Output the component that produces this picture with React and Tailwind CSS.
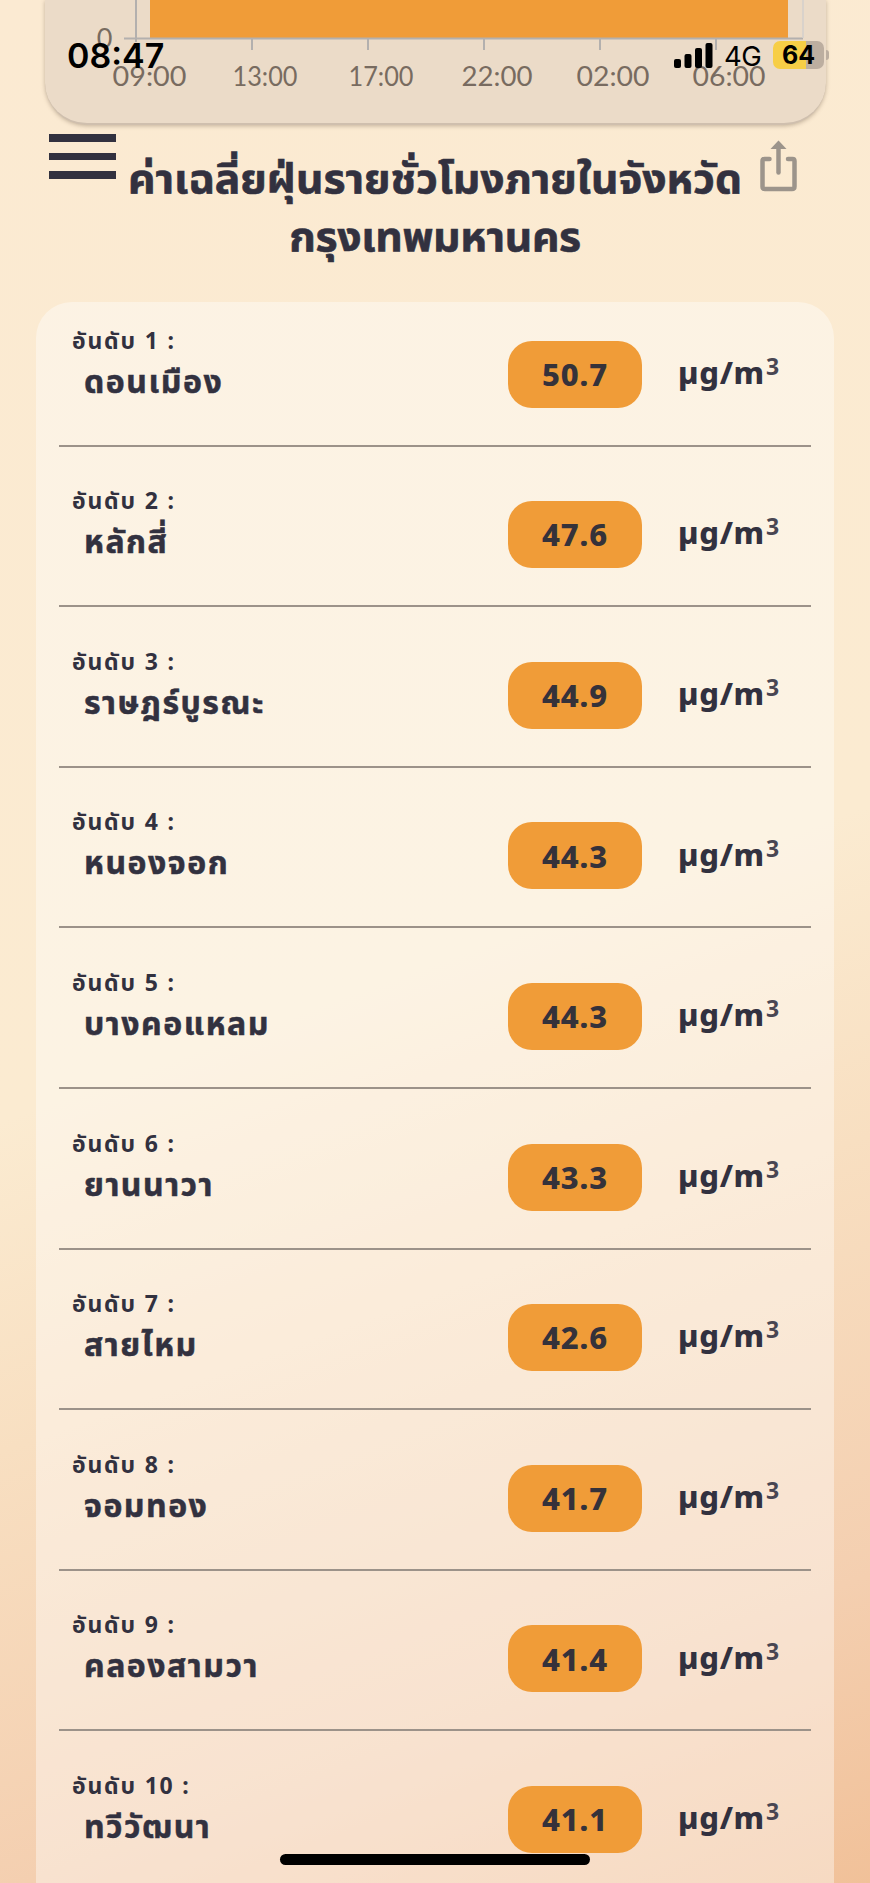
import React from "react";

const districts = [
  { name: "ดอนเมือง", value: "50.7" },
  { name: "หลักสี่", value: "47.6" },
  { name: "ราษฎร์บูรณะ", value: "44.9" },
  { name: "หนองจอก", value: "44.3" },
  { name: "บางคอแหลม", value: "44.3" },
  { name: "ยานนาวา", value: "43.3" },
  { name: "สายไหม", value: "42.6" },
  { name: "จอมทอง", value: "41.7" },
  { name: "คลองสามวา", value: "41.4" },
  { name: "ทวีวัฒนา", value: "41.1" },
];

const ticks = [
  { x: 207, label: "13:00", width: 65 },
  { x: 323, label: "17:00", width: 65 },
  { x: 439, label: "22:00", width: 71 },
  { x: 555, label: "02:00", width: 73 },
  { x: 671, label: "06:00", width: 73 },
];

const HourlyChart = () => (
  <section className="mx-auto h-[125px] w-[781px] rounded-b-[42px] border-b-2 border-[#cfbfae] bg-[#ebdbc8] shadow-[0_1px_4px_rgba(90,70,50,0.35)]">
    <svg className="block h-[122px] w-full" viewBox="0 0 781 122" fontFamily="Lato, sans-serif" fontSize="27">
      <rect x="105" y="0" width="638" height="38" fill="#f09c38" />
      <path d="M91 0V42M79 38.5H758" stroke="#b3b0ae" strokeWidth="2" fill="none" />
      <path d="M758 0V38" stroke="#d3cfcd" strokeWidth="1.5" />
      <text x="59.500" y="48" textAnchor="middle" fill="#786b60">0</text>
      <text x="104.500" y="86" textAnchor="middle" textLength="74" lengthAdjust="spacingAndGlyphs" fill="#786b60">
        09:00
      </text>
      {ticks.map((tick) => (
        <g key={tick.label}>
          <path d={`M${tick.x} 39V50`} stroke="#b3b0ae" strokeWidth="2" />
          <text
            x={tick.x + 13}
            y="86"
            textAnchor="middle"
            textLength={tick.width}
            lengthAdjust="spacingAndGlyphs"
            fill="#786b60"
          >
            {tick.label}
          </text>
        </g>
      ))}
    </svg>
  </section>
);

const StatusBar = () => (
  <div className="absolute inset-x-0 top-[37px] flex h-9 items-center pl-[67px] pr-[41px] font-['Inter',sans-serif] text-black">
    <span className="pt-0.5 text-[34px] font-semibold leading-none">08:47</span>
    <svg className="ml-auto h-[25px] w-[39px]" viewBox="0 0 39 25">
      <rect x="0" y="16" width="7" height="9" rx="2" />
      <rect x="10.500" y="11" width="7" height="14" rx="2" />
      <rect x="21" y="5" width="7" height="20" rx="2" />
      <rect x="31.500" y="0" width="7" height="25" rx="2" />
    </svg>
    <span className="ml-[11px] w-[39px] pt-1 text-[27.500px] leading-none tracking-[-0.5px]">4G</span>
    <span className="ml-2.5 flex h-7 w-[51px] items-center justify-center rounded-[7px] bg-[linear-gradient(90deg,#f7ce46_65%,#bcaea0_65%)] text-[25px] font-bold leading-none">
      64
    </span>
    <span className="ml-0.5 h-2.5 w-[3px] rounded-r-full bg-[#bcaea0]" />
  </div>
);

const MenuButton = () => (
  <button className="absolute left-[49px] top-[134px] flex w-[67px] flex-col gap-[11px]">
    <span className="h-[7.500px] w-full bg-[#32313f]" />
    <span className="h-[7.500px] w-full bg-[#32313f]" />
    <span className="h-[7.500px] w-full bg-[#32313f]" />
  </button>
);

const ShareButton = () => (
  <button className="absolute left-[760px] top-[140px] text-[#9c948b]">
    <svg className="block h-[52px] w-[38px]" viewBox="0 0 38 52" fill="none" stroke="currentColor" strokeWidth="4.500" strokeLinecap="round">
      <path d="M9.500 19H4.500Q2.500 19 2.500 21V46.500Q2.500 49 5 49H32Q34.500 49 34.500 46.500V21Q34.500 19 32.500 19H28" />
      <path d="M18.500 8V32.500" />
      <path d="M18.500 0.500L26.500 9H10.500Z" fill="currentColor" stroke="none" />
    </svg>
  </button>
);

const DistrictRow = ({ rank, district }) => (
  <li className="flex h-[160.600px] shrink-0 items-end border-b-2 border-[#9c9289]">
    <div className="ml-[13px] h-[118px] w-[436px] whitespace-nowrap font-bold">
      <p className="h-7 font-['Noto_Sans','Noto_Sans_Thai',sans-serif] text-[23px] leading-[27px] tracking-[1.800px]">
        อันดับ {rank} :
      </p>
      <p className="ml-3 text-[32px] leading-[51px] tracking-[1.500px] [-webkit-text-stroke:0.5px]">{district.name}</p>
    </div>
    <div className="mb-[37px] flex h-[67px] w-[134px] items-center justify-center rounded-[24px] bg-[#f09c38] font-['Noto_Sans',sans-serif] text-[31px] font-extrabold tracking-[0.800px] text-[#35323a]">
      {district.value}
    </div>
    <div className="mb-[39px] ml-9 flex h-[67px] items-center whitespace-nowrap font-['Noto_Sans',sans-serif] text-[31px] font-extrabold tracking-[0.700px]">
      µg/m<span className="ml-px pb-3 text-[23px] font-bold text-[#494652]">3</span>
    </div>
  </li>
);

export default function App() {
  return (
    <div className="relative h-[1883px] w-[870px] overflow-hidden bg-[linear-gradient(160deg,#fbead2_0%,#fbebd1_51%,#f8dfc1_66%,#f4cfb0_86%,#f1c199_100%)] font-['Lato','Noto_Sans_Thai','Noto_Sans',sans-serif] text-[#32313f]">
      <HourlyChart />
      <h1 className="flex h-[177px] origin-top scale-x-[1.065] flex-col items-center pt-6 text-[40px] font-bold leading-[58px] [-webkit-text-stroke:0.6px]">
        <span>ค่าเฉลี่ยฝุ่นรายชั่วโมงภายในจังหวัด</span>
        <span className="tracking-[-0.300px]">กรุงเทพมหานคร</span>
      </h1>
      <main className="mx-9 flex h-[1581px] flex-col overflow-hidden rounded-t-[36px] bg-white/40 px-[23px]">
        <ol className="-mt-4">
          {districts.map((district, i) => (
            <DistrictRow key={district.name} rank={i + 1} district={district} />
          ))}
        </ol>
      </main>
      <StatusBar />
      <MenuButton />
      <ShareButton />
      <div className="absolute left-[280px] top-[1854px] h-[11px] w-[310px] rounded-full bg-black" />
    </div>
  );
}
